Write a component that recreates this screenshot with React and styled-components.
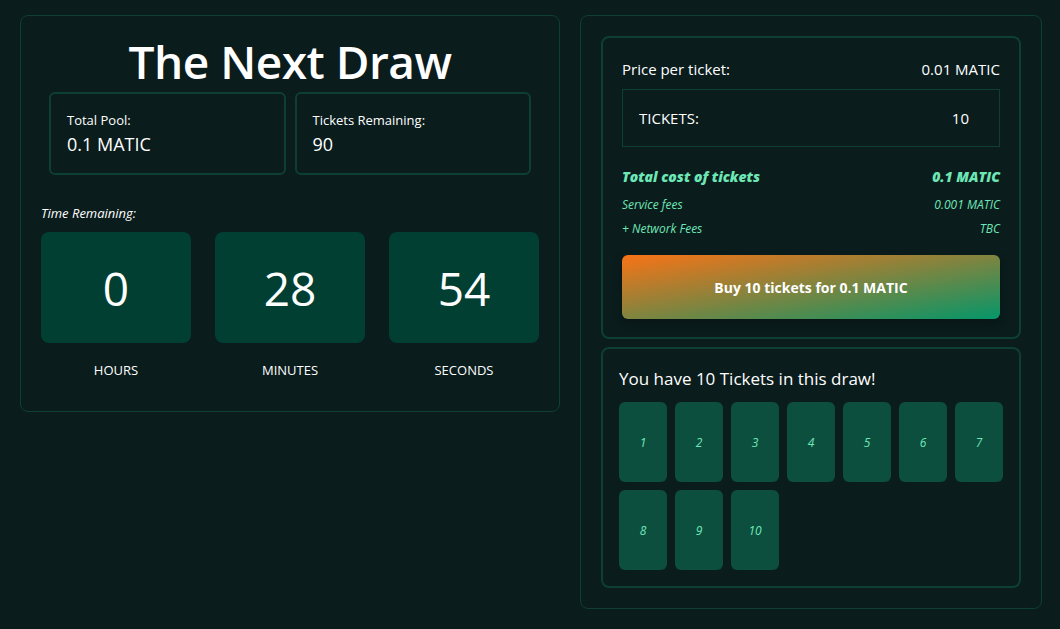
import React from "react";
import styled, { createGlobalStyle } from "styled-components";

const GlobalStyle = createGlobalStyle`
  * { box-sizing: border-box; }
  html, body { margin: 0; padding: 0; background: #0a1c1c; }
  body { font-family: "Open Sans", "Noto Sans", sans-serif; color: #ffffff; }
`;

const Page = styled.div`
  display: grid;
  grid-template-columns: 540px 462px;
  column-gap: 20px;
  align-items: start;
  padding: 15px 20px;
  min-height: 629px;
  background: #0a1c1c;
`;

const Panel = styled.section`
  border: 1px solid #0e3f33;
  border-radius: 8px;
  padding: 20px;
  background: #0a1c1c;
  display: flex;
  flex-direction: column;
  gap: ${(p) => p.$gap || 0}px;
`;

const Title = styled.h1`
  margin: 0 0 6px;
  font-size: 46px;
  font-weight: 600;
  line-height: 50px;
  text-align: center;
  letter-spacing: -0.5px;
`;

const Stats = styled.div`
  display: grid;
  grid-template-columns: 1fr 1fr;
  gap: 9px;
  margin: 0 8px;
`;

const StatBox = styled.div`
  border: 2px solid #0e3f33;
  border-radius: 6px;
  padding: 16px;
  height: 83px;
`;

const StatLabel = styled.div`
  font-size: 13px;
  line-height: 20px;
`;

const StatValue = styled.div`
  font-size: 18px;
  line-height: 28px;
`;

const TimeLabel = styled.div`
  font-size: 13px;
  font-style: italic;
  line-height: 20px;
  margin-top: 28px;
  margin-bottom: 9px;
`;

const Countdown = styled.div`
  display: grid;
  grid-template-columns: repeat(3, 1fr);
  column-gap: 24px;
`;

const CountCol = styled.div`
  display: flex;
  flex-direction: column;
  align-items: center;
`;

const CountBox = styled.div`
  width: 100%;
  height: 111px;
  background: #013f33;
  border-radius: 8px;
  display: flex;
  align-items: center;
  justify-content: center;
  font-size: 46px;
  font-weight: 400;
`;

const CountLabel = styled.div`
  font-size: 13px;
  line-height: 20px;
  margin-top: 17px;
  margin-bottom: 11px;
`;

const Card = styled.div`
  border: 2px solid #0e3f33;
  border-radius: 8px;
  padding: ${(p) => p.$pad};
`;

const Row = styled.div`
  display: flex;
  justify-content: space-between;
  align-items: center;
`;

const PriceRow = styled(Row)`
  font-size: 15px;
  line-height: 24px;
  margin-bottom: 8px;
`;

const TicketInput = styled(Row)`
  border: 1px solid #0e3f33;
  height: 58px;
  padding: 0 30px 0 16px;
  font-size: 15px;
`;

const TotalRow = styled(Row)`
  margin-top: 20px;
  font-size: 14px;
  font-weight: 800;
  font-style: italic;
  color: #6ee7b7;
  line-height: 20px;
`;

const FeeRow = styled(Row)`
  font-size: 12px;
  font-style: italic;
  color: #6ee7b7;
  line-height: 16px;
  margin-top: ${(p) => p.$mt}px;
`;

const BuyButton = styled.button`
  width: 100%;
  height: 64px;
  margin-top: 18px;
  border: none;
  border-radius: 6px;
  background: linear-gradient(to bottom right, #f97316, #059669);
  color: #ffffff;
  font-family: inherit;
  font-size: 14px;
  font-weight: 700;
  box-shadow: 0 4px 8px rgba(0, 0, 0, 0.25);
`;

const OwnedTitle = styled.div`
  font-size: 17px;
  line-height: 28px;
  margin-bottom: 9px;
`;

const TicketGrid = styled.div`
  display: flex;
  flex-wrap: wrap;
  gap: 8px;
`;

const Ticket = styled.div`
  width: 48px;
  height: 80px;
  background: #0d4f3f;
  border-radius: 6px;
  display: flex;
  align-items: center;
  justify-content: center;
  font-size: 12px;
  font-style: italic;
  color: #6ee7b7;
`;

export default function App() {
  const tickets = Array.from({ length: 10 }, (_, i) => i + 1);
  return (
    <>
      <GlobalStyle />
      <Page>
        <Panel>
          <Title>The Next Draw</Title>
          <Stats>
            <StatBox>
              <StatLabel>Total Pool:</StatLabel>
              <StatValue>0.1 MATIC</StatValue>
            </StatBox>
            <StatBox>
              <StatLabel>Tickets Remaining:</StatLabel>
              <StatValue>90</StatValue>
            </StatBox>
          </Stats>
          <TimeLabel>Time Remaining:</TimeLabel>
          <Countdown>
            {[
              ["0", "HOURS"],
              ["28", "MINUTES"],
              ["54", "SECONDS"],
            ].map(([v, l]) => (
              <CountCol key={l}>
                <CountBox>{v}</CountBox>
                <CountLabel>{l}</CountLabel>
              </CountCol>
            ))}
          </Countdown>
        </Panel>
        <Panel $gap={8}>
          <Card $pad="19px 19px 18px">
            <PriceRow>
              <span>Price per ticket:</span>
              <span>0.01 MATIC</span>
            </PriceRow>
            <TicketInput>
              <span>TICKETS:</span>
              <span>10</span>
            </TicketInput>
            <TotalRow>
              <span>Total cost of tickets</span>
              <span>0.1 MATIC</span>
            </TotalRow>
            <FeeRow $mt={10}>
              <span>Service fees</span>
              <span>0.001 MATIC</span>
            </FeeRow>
            <FeeRow $mt={8}>
              <span>+ Network Fees</span>
              <span>TBC</span>
            </FeeRow>
            <BuyButton>Buy 10 tickets for 0.1 MATIC</BuyButton>
          </Card>
          <Card $pad="16px">
            <OwnedTitle>You have 10 Tickets in this draw!</OwnedTitle>
            <TicketGrid>
              {tickets.map((t) => (
                <Ticket key={t}>{t}</Ticket>
              ))}
            </TicketGrid>
          </Card>
        </Panel>
      </Page>
    </>
  );
}
